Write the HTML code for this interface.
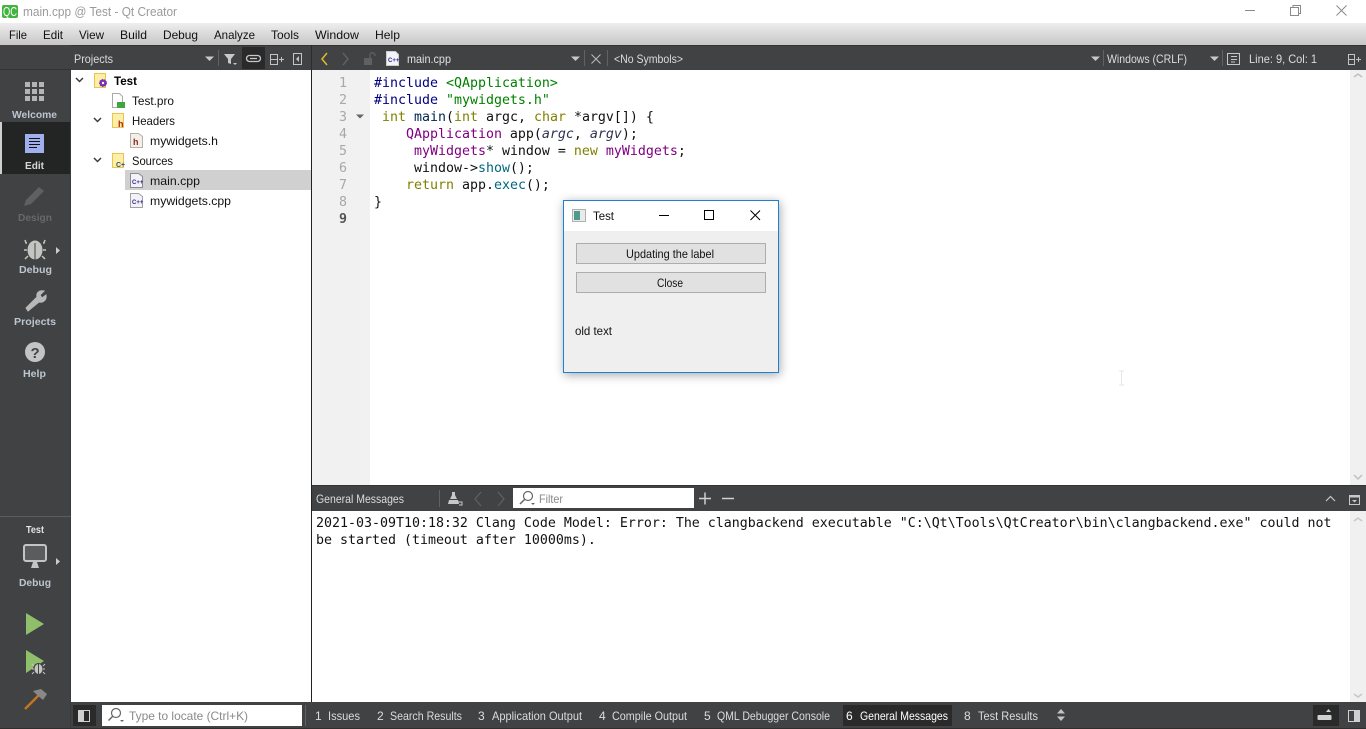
<!DOCTYPE html>
<html><head><meta charset="utf-8"><title>main.cpp @ Test - Qt Creator</title>
<style>
html,body{margin:0;padding:0;background:#fff;overflow:hidden}
svg{display:block}
text{font-family:"Liberation Sans",sans-serif;font-size:12px;white-space:pre}
.m{font-family:"DejaVu Sans Mono","Liberation Mono",monospace;font-size:13.29px}
.s{font-weight:bold;font-size:10.5px;fill:#bcc6d0}
</style></head><body>
<svg xmlns="http://www.w3.org/2000/svg" width="1366" height="729" viewBox="0 0 1366 729">
<defs>
<linearGradient id="mb" x1="0" y1="0" x2="0" y2="1"><stop offset="0" stop-color="#eeeeee"/><stop offset="1" stop-color="#c6c6c6"/></linearGradient>
<filter id="sh" x="-20%" y="-20%" width="140%" height="140%"><feDropShadow dx="1" dy="2" stdDeviation="5" flood-color="#000" flood-opacity=".35"/></filter>
</defs>
<rect width="1366" height="729" fill="#fff"/>
<!-- title bar -->
<rect x="2" y="5" width="16" height="13" rx="2" fill="#41b53f"/>
<text x="3" y="16" style="font-size:12.5px" fill="#fff" textLength="14" lengthAdjust="spacingAndGlyphs">QC</text>
<text x="23" y="16" style="font-size:13px" fill="#9a9a9a" textLength="154" lengthAdjust="spacingAndGlyphs">main.cpp @ Test - Qt Creator</text>
<path d="M1245 10.500h10" stroke="#8a8a8a" fill="none"/>
<path d="M1290.500 7.500h8v8h-8zM1293 7.500v-2h7.500v8h-2" stroke="#8a8a8a" fill="none"/>
<path d="M1336.500 5.500l10 10M1346.500 5.500l-10 10" stroke="#8a8a8a" fill="none"/>
<!-- menu -->
<rect y="23" width="1366" height="22" fill="url(#mb)"/>
<g fill="#111">
<text x="9" y="39" textLength="18" lengthAdjust="spacingAndGlyphs">File</text>
<text x="43" y="39" textLength="20" lengthAdjust="spacingAndGlyphs">Edit</text>
<text x="79" y="39" textLength="25" lengthAdjust="spacingAndGlyphs">View</text>
<text x="120" y="39" textLength="27" lengthAdjust="spacingAndGlyphs">Build</text>
<text x="163" y="39" textLength="35" lengthAdjust="spacingAndGlyphs">Debug</text>
<text x="214" y="39" textLength="41" lengthAdjust="spacingAndGlyphs">Analyze</text>
<text x="271" y="39" textLength="28" lengthAdjust="spacingAndGlyphs">Tools</text>
<text x="315" y="39" textLength="44" lengthAdjust="spacingAndGlyphs">Window</text>
<text x="375" y="39" textLength="25" lengthAdjust="spacingAndGlyphs">Help</text>
</g>
<!-- toolbar row -->
<rect y="45" width="1366" height="25" fill="#404244"/>
<rect y="45" width="1366" height="1" fill="#333"/>
<!-- status bar -->
<rect x="71" y="702" width="1295" height="27" fill="#404244"/>
<!-- left bar -->
<rect y="45" width="71" height="684" fill="#404244"/>
<rect x="0" y="69" width="71" height="1" fill="#333"/>
<rect x="70" y="70" width="1" height="659" fill="#383a3c"/>
<rect x="0" y="516" width="71" height="1" fill="#5a5c5e"/>
<rect y="728" width="1366" height="1" fill="#2e2e2e"/>
<rect x="0" y="122" width="70" height="52" fill="#232424"/>
<rect x="0" y="122" width="2" height="52" fill="#cfcfcf"/>
<!-- welcome -->
<g fill="#b4b4b4">
<rect x="25" y="82" width="5" height="5"/><rect x="32" y="82" width="5" height="5"/><rect x="39" y="82" width="5" height="5"/>
<rect x="25" y="89" width="5" height="5"/><rect x="32" y="89" width="5" height="5"/><rect x="39" y="89" width="5" height="5"/>
<rect x="25" y="96" width="5" height="5"/><rect x="32" y="96" width="5" height="5"/><rect x="39" y="96" width="5" height="5"/>
</g>
<text class="s" x="12" y="118" textLength="45" lengthAdjust="spacingAndGlyphs">Welcome</text>
<!-- edit -->
<rect x="25" y="134" width="19" height="19" fill="#a0b0ee"/>
<path d="M29 138.500h11M29 141.500h11M29 144.500h11M29 147.500h8" stroke="#111" stroke-width="1"/>
<text class="s" x="25" y="169" textLength="19" lengthAdjust="spacingAndGlyphs" style="fill:#d8d8d8">Edit</text>
<!-- design -->
<path d="M24 206l2-6 13-13 5 4-13 13z" fill="#5f6062"/>
<text class="s" x="18" y="221" textLength="34" lengthAdjust="spacingAndGlyphs" style="fill:#66686a">Design</text>
<!-- debug -->
<ellipse cx="35" cy="250" rx="7.500" ry="9.500" fill="#c4c4c0"/>
<path d="M30 241c1-2 9-2 10 0" fill="none" stroke="#404244" stroke-width="1"/>
<path d="M35 243v17" stroke="#404244" stroke-width="1"/>
<path d="M27 243h-1l-1-3M43 243h1l1-3M27 250h-3M43 250h3M28 256l-3 3M42 256l3 3" stroke="#c4c4c0" stroke-width="1.500" fill="none"/>
<path d="M56 247l4 3.500-4 3.500z" fill="#ccc"/>
<text class="s" x="19" y="273" textLength="33" lengthAdjust="spacingAndGlyphs">Debug</text>
<!-- projects -->
<path d="M26 308l11-11c-1-4 2-7 7-6l-4 4 2 3 4-3c1 5-3 8-7 7l-11 9z" fill="#b8b8b8" stroke="#b8b8b8"/>
<text class="s" x="14" y="325" textLength="42" lengthAdjust="spacingAndGlyphs">Projects</text>
<!-- help -->
<circle cx="35" cy="352" r="10" fill="#c4c4c4"/>
<text x="30.500" y="358" style="font-size:15px;font-weight:bold" fill="#404244">?</text>
<text class="s" x="23" y="377" textLength="23" lengthAdjust="spacingAndGlyphs">Help</text>
<!-- kit -->
<text x="26" y="533" style="font-size:10.5px;font-weight:bold" fill="#e4e4e4" textLength="18" lengthAdjust="spacingAndGlyphs">Test</text>
<rect x="24" y="545" width="22" height="16" rx="2" fill="#5b5c5e" stroke="#c4c4c4" stroke-width="2"/>
<path d="M33 562h4l2 6h-8z" fill="#c4c4c4"/>
<path d="M56 558l4 3.500-4 3.500z" fill="#ccc"/>
<text class="s" x="19" y="586" textLength="32" lengthAdjust="spacingAndGlyphs">Debug</text>
<!-- run -->
<path d="M26 613l18 11-18 11z" fill="#8fbf6b"/>
<path d="M26 650l18 11-18 12z" fill="#8fbf6b"/>
<ellipse cx="38.500" cy="669" rx="5.500" ry="6" fill="#404244"/>
<ellipse cx="38.500" cy="669" rx="4" ry="5" fill="#c4c4c0"/>
<path d="M38.500 664v10" stroke="#404244"/>
<path d="M34 666l-2-2M43 666l2-2M34 669h-2M43 669h2M34 672l-2 2M43 672l2 2" stroke="#c4c4c0"/>
<!-- hammer -->
<path d="M25 709l14-14" stroke="#c8741e" stroke-width="2.500"/>
<path d="M33 691l8-2 6 5-4 6-6-5z" fill="#888"/>
<!-- projects pane head -->
<text x="74" y="63" fill="#dcdcdc" textLength="39" lengthAdjust="spacingAndGlyphs">Projects</text>
<path d="M205 56.500h9l-4.500 4.500z" fill="#c8c8c8"/>
<rect x="218" y="50" width="1" height="16" fill="#606265"/>
<path d="M224 54h11l-4 5v5l-3-1v-4z" fill="#c8c8c8"/>
<path d="M233 63h4l-2 2z" fill="#c8c8c8"/>
<rect x="242" y="47" width="23" height="22" fill="#2a2a2a"/>
<rect x="246.500" y="55.500" width="14" height="6" rx="3" fill="none" stroke="#c8c8c8" stroke-width="1.300"/>
<path d="M250 58.500h7" stroke="#c8c8c8" stroke-width="1.300"/>
<path d="M270.500 54.500h7v10h-7zM270.500 59.500h7M279 59.500h5M281.500 57v5" fill="none" stroke="#c4c4c4"/>
<path d="M293.500 53.500h8v11h-8z" fill="none" stroke="#c4c4c4"/><path d="M299 56l-3 3 3 3z" fill="#c4c4c4"/>
<rect x="311" y="45" width="1" height="25" fill="#2c2c2c"/>
<!-- tree -->
<g fill="none" stroke="#3c3c3c" stroke-width="1.500">
<path d="M76 78l3.500 3.500 3.500-3.500"/><path d="M94 118l3.500 3.500 3.500-3.500"/><path d="M94 158l3.500 3.500 3.500-3.500"/>
</g>
<rect x="94.500" y="73.500" width="11" height="14" fill="#fdeea8" stroke="#e8c64c"/>
<circle cx="103" cy="83" r="3.500" fill="#7b2fb5" stroke="#7b2fb5" stroke-dasharray="1.500 1"/><circle cx="103" cy="83" r="1.200" fill="#fff"/>
<text x="114" y="85" fill="#000" style="font-weight:bold" textLength="23" lengthAdjust="spacingAndGlyphs">Test</text>
<path d="M112.500 93.500h7l3 3v11h-10z" fill="#fff" stroke="#aaa"/>
<rect x="117" y="102" width="8" height="6" fill="#41a53f"/>
<text x="132" y="105" fill="#111" textLength="42" lengthAdjust="spacingAndGlyphs">Test.pro</text>
<rect x="112.500" y="113.500" width="11" height="14" fill="#fdeea8" stroke="#e8c64c"/>
<text x="118" y="127" style="font-size:9px;font-weight:bold" fill="#b02020">h</text>
<text x="132" y="125" fill="#111" textLength="43" lengthAdjust="spacingAndGlyphs">Headers</text>
<path d="M130.500 133.500h8l4 3v11h-12z" fill="#f3efe8" stroke="#b5b0a8"/>
<text x="133" y="145" style="font-size:9px;font-weight:bold" fill="#8c2a2a">h</text>
<text x="150" y="145" fill="#111" textLength="68" lengthAdjust="spacingAndGlyphs">mywidgets.h</text>
<rect x="112.500" y="153.500" width="11" height="14" fill="#fdeea8" stroke="#e8c64c"/>
<text x="116" y="167" style="font-size:7px;font-weight:bold" fill="#335577">C+</text>
<text x="132" y="165" fill="#111" textLength="41" lengthAdjust="spacingAndGlyphs">Sources</text>
<rect x="125" y="170" width="186" height="20" fill="#d0d0d0"/>
<path d="M130.500 173.500h8l4 3v11h-12z" fill="#f4f2f6" stroke="#8a8a90"/>
<text x="132" y="184" style="font-size:6px;font-weight:bold" fill="#2a2a90">C++</text>
<text x="150" y="185" fill="#111" textLength="50" lengthAdjust="spacingAndGlyphs">main.cpp</text>
<path d="M130.500 193.500h8l4 3v11h-12z" fill="#f4f2f6" stroke="#a0a0a8"/>
<text x="132" y="204" style="font-size:6px;font-weight:bold" fill="#2a2a90">C++</text>
<text x="150" y="205" fill="#111" textLength="81" lengthAdjust="spacingAndGlyphs">mywidgets.cpp</text>
<rect x="311" y="70" width="1" height="632" fill="#222"/>
<!-- editor toolbar -->
<path d="M327 53l-5 6 5 6" fill="none" stroke="#e3b92a" stroke-width="1.500"/>
<path d="M343 53l5 6-5 6" fill="none" stroke="#5e6062" stroke-width="1.500"/>
<rect x="364" y="58" width="8" height="7" fill="#5e6062"/>
<path d="M370 58v-3c0-3 4-3 5 0v1" fill="none" stroke="#5e6062" stroke-width="1.300"/>
<path d="M386.500 51.500h9l3 3v11h-12z" fill="#f4f2f6" stroke="#ccc"/>
<text x="388" y="62" style="font-size:6px;font-weight:bold" fill="#2a2a90">C++</text>
<text x="407" y="63" fill="#e0e0e0" textLength="44" lengthAdjust="spacingAndGlyphs">main.cpp</text>
<path d="M571 56.500h9l-4.500 4.500z" fill="#c8c8c8"/>
<rect x="584" y="50" width="1" height="16" fill="#606265"/>
<path d="M591.500 54.500l9 9M600.500 54.500l-9 9" stroke="#bcbcbc" fill="none"/>
<rect x="607" y="50" width="1" height="16" fill="#606265"/>
<text x="614" y="63" fill="#dcdcdc" textLength="69" lengthAdjust="spacingAndGlyphs">&lt;No Symbols&gt;</text>
<path d="M1091 56.500h9l-4.500 4.500z" fill="#c8c8c8"/>
<rect x="1103" y="50" width="1" height="16" fill="#606265"/>
<text x="1107" y="63" fill="#dcdcdc" textLength="80" lengthAdjust="spacingAndGlyphs">Windows (CRLF)</text>
<path d="M1210 56.500h9l-4.500 4.500z" fill="#c8c8c8"/>
<rect x="1222" y="50" width="1" height="16" fill="#606265"/>
<path d="M1227.500 53.500h12v11h-12zM1231 56.500h6M1231 59.500h6M1231 62h4" fill="none" stroke="#c8c8c8"/>
<text x="1249" y="63" fill="#dcdcdc" textLength="68" lengthAdjust="spacingAndGlyphs">Line: 9, Col: 1</text>
<path d="M1348.500 54.500h6v10h-6zM1348.500 59.500h6M1356 59.500h5M1358.500 57v5" fill="none" stroke="#c4c4c4"/>
<!-- editor -->
<rect x="312" y="70" width="58" height="416" fill="#f1f1f1"/>
<rect x="1350" y="70" width="16" height="416" fill="#f0f0f0"/>
<path d="M1354 77l4-3 4 3" fill="none" stroke="#c0c0c0" stroke-width="1.500"/>
<path d="M1354 475l4 4 4-4" fill="none" stroke="#c0c0c0" stroke-width="1.500"/>
<text class="m" x="339" y="87" fill="#a8a8a8">1</text>
<text class="m" x="339" y="104" fill="#a8a8a8">2</text>
<text class="m" x="339" y="121" fill="#a8a8a8">3</text>
<text class="m" x="339" y="138" fill="#a8a8a8">4</text>
<text class="m" x="339" y="155" fill="#a8a8a8">5</text>
<text class="m" x="339" y="172" fill="#a8a8a8">6</text>
<text class="m" x="339" y="189" fill="#a8a8a8">7</text>
<text class="m" x="339" y="206" fill="#a8a8a8">8</text>
<text class="m" x="339" y="223" fill="#555" style="font-weight:bold">9</text>
<path d="M356 114.500h8l-4 4z" fill="#666"/>
<text class="m" x="374" y="87" fill="#000080">#include <tspan fill="#008000">&lt;QApplication&gt;</tspan></text>
<text class="m" x="374" y="104" fill="#000080">#include <tspan fill="#008000">"mywidgets.h"</tspan></text>
<text class="m" x="374" y="121" fill="#111"> <tspan fill="#808000">int</tspan> <tspan fill="#00264d">main</tspan>(<tspan fill="#808000">int</tspan> argc, <tspan fill="#808000">char</tspan> *argv[]) {</text>
<text class="m" x="374" y="138" fill="#111">    <tspan fill="#800080">QApplication</tspan> app(<tspan font-style="italic" fill="#303050">argc</tspan>, <tspan font-style="italic" fill="#303050">argv</tspan>);</text>
<text class="m" x="374" y="155" fill="#111">     <tspan fill="#800080">myWidgets</tspan>* window = <tspan fill="#808000">new</tspan> <tspan fill="#800080">myWidgets</tspan>;</text>
<text class="m" x="374" y="172" fill="#111">     window-&gt;<tspan fill="#00677c">show</tspan>();</text>
<text class="m" x="374" y="189" fill="#111">    <tspan fill="#808000">return</tspan> app.<tspan fill="#00677c">exec</tspan>();</text>
<text class="m" x="374" y="206" fill="#111">}</text>
<path d="M1119 371h5M1119 385h5M1121.500 371v14" stroke="#e6e6e6" fill="none"/>
<!-- dialog -->
<rect x="563.500" y="200.500" width="215" height="172" fill="#efefef" stroke="#1e80d4" filter="url(#sh)"/>
<rect x="564" y="201" width="214" height="30" fill="#fff"/>
<rect x="572.500" y="209.500" width="13" height="12" fill="#e8eaec" stroke="#b0b0b0"/>
<rect x="574" y="211" width="6" height="9" fill="#4f9a8a"/>
<text x="593" y="220" fill="#111" textLength="21" lengthAdjust="spacingAndGlyphs">Test</text>
<path d="M659 215.500h10" stroke="#000" fill="none"/>
<rect x="704.500" y="210.500" width="9" height="9" fill="none" stroke="#000"/>
<path d="M750.500 210.500l9.500 9.500M760 210.500l-9.500 9.500" stroke="#000" fill="none"/>
<rect x="576.500" y="243.500" width="189" height="20" fill="#e1e1e1" stroke="#adadad"/>
<text x="626" y="258" fill="#111" textLength="88" lengthAdjust="spacingAndGlyphs">Updating the label</text>
<rect x="576.500" y="272.500" width="189" height="20" fill="#e1e1e1" stroke="#adadad"/>
<text x="657" y="287" fill="#111" textLength="26" lengthAdjust="spacingAndGlyphs">Close</text>
<text x="575" y="335" fill="#111" textLength="37" lengthAdjust="spacingAndGlyphs">old text</text>
<!-- output header -->
<rect x="312" y="485" width="1054" height="26" fill="#404244"/>
<rect x="312" y="485" width="1054" height="1" fill="#333"/>
<text x="316" y="503" fill="#dcdcdc" textLength="88" lengthAdjust="spacingAndGlyphs">General Messages</text>
<rect x="439" y="490" width="1" height="17" fill="#606265"/>
<path d="M452 492h3v3l2 4h-7l2-4zM449 500h9l1 4h-11z" fill="#c8c8c8"/><path d="M458 502h4v3h-3" stroke="#c8c8c8" fill="none"/>
<path d="M481 492l-6 7 6 7" fill="none" stroke="#5e6062" stroke-width="1.300"/>
<path d="M498 492l6 7-6 7" fill="none" stroke="#5e6062" stroke-width="1.300"/>
<rect x="513" y="488" width="181" height="20" fill="#fff"/>
<circle cx="528" cy="496" r="4.500" fill="none" stroke="#666" stroke-width="1.200"/>
<path d="M524.500 499.500l-4.500 4.500" stroke="#666" stroke-width="1.500"/>
<path d="M531 503h4l-2 2z" fill="#666"/>
<text x="539" y="503" fill="#8a8a8a" textLength="24" lengthAdjust="spacingAndGlyphs">Filter</text>
<path d="M699 498.500h12M705 492.500v12" stroke="#d0d0d0" stroke-width="1.500"/>
<path d="M722 498.500h12" stroke="#d0d0d0" stroke-width="1.500"/>
<path d="M1326 501l4.500-4.500 4.500 4.500" fill="none" stroke="#c8c8c8" stroke-width="1.200"/>
<rect x="1349.500" y="495.500" width="10" height="9" fill="none" stroke="#c8c8c8"/>
<rect x="1349.500" y="495.500" width="10" height="2" fill="#c8c8c8"/>
<path d="M1352 500h5l-2.500 2.500z" fill="#c8c8c8"/>
<!-- output -->
<rect x="1350" y="511" width="16" height="191" fill="#f0f0f0"/>
<path d="M1354 521l4-3 4 3" fill="none" stroke="#c8c8c8" stroke-width="1.500"/>
<path d="M1354 694l4 3 4-3" fill="none" stroke="#c8c8c8" stroke-width="1.500"/>
<text class="m" x="316" y="527" fill="#111">2021-03-09T10:18:32 Clang Code Model: Error: The clangbackend executable "C:\Qt\Tools\QtCreator\bin\clangbackend.exe" could not</text>
<text class="m" x="316" y="544" fill="#111">be started (timeout after 10000ms).</text>
<!-- status bar contents -->
<rect x="73" y="705" width="23" height="21" fill="#2a2a2a"/>
<rect x="78.500" y="710.500" width="11" height="11" fill="#2a2a2a" stroke="#d0d0d0"/>
<rect x="78" y="710" width="6" height="12" fill="#d0d0d0"/>
<rect x="102" y="705" width="200" height="21" fill="#fff"/>
<circle cx="116" cy="713" r="4.500" fill="none" stroke="#666" stroke-width="1.200"/>
<path d="M112.500 716.500l-4 4" stroke="#666" stroke-width="1.500"/>
<path d="M120 720h4l-2 2z" fill="#666"/>
<text x="129" y="720" fill="#8a8a8a" textLength="119" lengthAdjust="spacingAndGlyphs">Type to locate (Ctrl+K)</text>
<rect x="305" y="705" width="1" height="21" fill="#606265"/>
<g fill="#dcdcdc">
<text x="315" y="720">1</text><text x="328" y="720" textLength="32" lengthAdjust="spacingAndGlyphs">Issues</text>
<text x="377" y="720">2</text><text x="390" y="720" textLength="72" lengthAdjust="spacingAndGlyphs">Search Results</text>
<text x="478" y="720">3</text><text x="492" y="720" textLength="90" lengthAdjust="spacingAndGlyphs">Application Output</text>
<text x="599" y="720">4</text><text x="612" y="720" textLength="75" lengthAdjust="spacingAndGlyphs">Compile Output</text>
<text x="704" y="720">5</text><text x="717" y="720" textLength="113" lengthAdjust="spacingAndGlyphs">QML Debugger Console</text>
<rect x="843" y="705" width="109" height="21" fill="#2a2a2a"/>
<text x="846" y="720" fill="#fff">6</text><text x="860" y="720" fill="#fff" textLength="88" lengthAdjust="spacingAndGlyphs">General Messages</text>
<text x="964" y="720">8</text><text x="978" y="720" textLength="60" lengthAdjust="spacingAndGlyphs">Test Results</text>
</g>
<path d="M1057 713.500l4-4.500 4 4.500zM1057 716.500l4 4.500 4-4.500z" fill="#c4c4c4"/>
<rect x="1313" y="705" width="26" height="21" fill="#2a2a2a"/>
<rect x="1317.500" y="715" width="14" height="5" rx="1" fill="#d0d0d0"/>
<path d="M1326 712l2.500-3 2.500 3z" fill="#d0d0d0"/>
<rect x="1348.500" y="710.500" width="11" height="11" fill="#404244" stroke="#d0d0d0"/>
<rect x="1354" y="710" width="6" height="12" fill="#d0d0d0"/>
</svg>
</body></html>
